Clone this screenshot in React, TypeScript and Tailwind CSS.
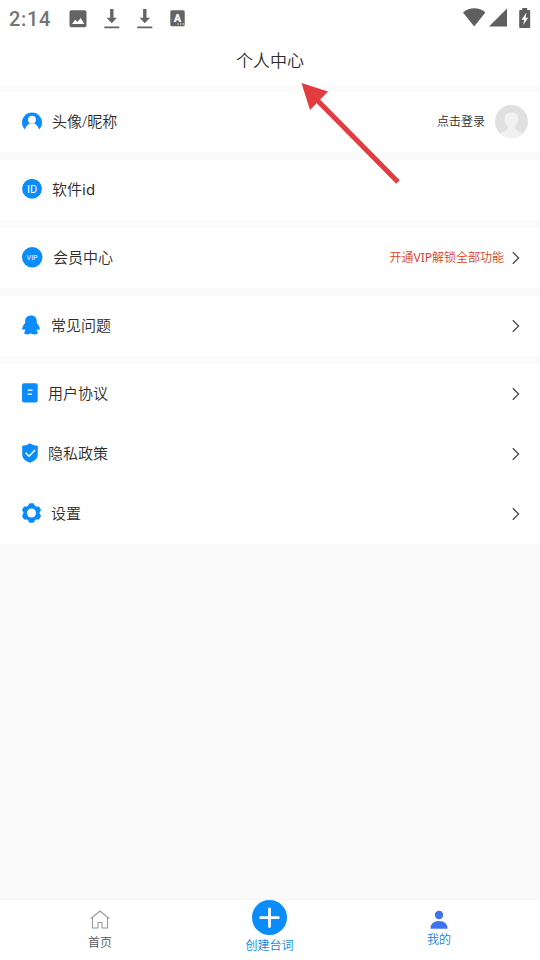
import type { ReactNode } from "react";

const BLUE = "#0a8cfa";

function UserIcon() {
    return (
        <svg width="20" height="20" viewBox="0 0 20 20" fill={BLUE}>
            <path d="M3.600 19.200a10 10 0 1 1 12.800 0Z" />
            <circle cx="10" cy="8.700" r="3.900" fill="#fff" />
            <path d="M2.600 20c.7-4 3-6.500 5-7.400h4.800c2 .9 4.300 3.400 5 7.400Z" fill="#fff" />
        </svg>
    );
}

function IdIcon() {
    return (
        <svg width="20" height="20" viewBox="0 0 20 20">
            <circle cx="10" cy="9.800" r="9.900" fill={BLUE} />
            <text x="10" y="13.600" textAnchor="middle" fill="#fff" className="font-['Roboto',sans-serif] text-[11px] font-normal">
                ID
            </text>
        </svg>
    );
}

function VipIcon() {
    return (
        <svg width="21" height="21" viewBox="0 0 21 21">
            <circle cx="10.200" cy="10.300" r="10.200" fill={BLUE} />
            <text x="4.600" y="13.200" textLength="11" lengthAdjust="spacingAndGlyphs" fill="#fff" className="font-['Roboto',sans-serif] text-[8px] font-normal">
                VIP
            </text>
        </svg>
    );
}

function PenguinIcon() {
    return (
        <svg width="18" height="20" viewBox="0 0 18 20" fill={BLUE}>
            <path d="M9 .5C5.600.500 3.200 2.700 3.200 5.900v2C1.800 9.600.200 11.900.200 13.600c0 1 .5 1.400 1.100 1.200.5-.2.900-.5 1.200-.9.2.8.500 1.500 1 2.100-.8.4-1.300 1-1.300 1.700 0 1.100 1.200 1.700 3.200 1.700 1.600 0 2.900-.4 3.600-1.200.7.8 2 1.200 3.600 1.200 2 0 3.200-.6 3.200-1.700 0-.7-.5-1.300-1.300-1.700.5-.6.8-1.300 1-2.100.3.4.7.700 1.200.9.6.200 1.100-.2 1.100-1.200 0-1.700-1.600-4-3-5.700v-2C14.800 2.700 12.400.500 9 .5Z" />
        </svg>
    );
}

function DocIcon() {
    return (
        <svg width="16" height="20" viewBox="0 0 16 20" fill="none">
            <rect y=".2" width="15.700" height="19.200" rx="1.800" fill={BLUE} />
            <path d="M5.500 7.200h5M5.500 11.200h4.500" stroke="#fff" strokeWidth="1.300" />
        </svg>
    );
}

function ShieldIcon() {
    return (
        <svg width="16" height="20" viewBox="0 0 16 20" fill="none">
            <path d="M8 .3c2 1.500 4.500 2.200 7.800 2.400v8.600c0 4.200-3.300 7-7.800 8.400-4.500-1.400-7.800-4.200-7.800-8.400V2.700C3.500 2.500 6 1.800 8 .3Z" fill={BLUE} />
            <path d="m3.500 9.800 3.500 3.500 6-6.300" stroke="#fff" strokeWidth="1.500" />
        </svg>
    );
}

function GearIcon() {
    return (
        <svg width="19" height="20" viewBox="0 0 19 20">
            <path
                d="M8 1.300h3l1.300 2.300 1.500.9 2.600-.1 1.500 2.700-1.300 2.200v1.400l1.300 2.200-1.500 2.700-2.600-.1-1.500.9-1.300 2.300H8l-1.300-2.300-1.500-.9-2.600.1-1.500-2.700 1.300-2.200V9.300L1.100 7.100l1.500-2.700 2.600.1 1.500-.9Z"
                fill={BLUE}
                stroke={BLUE}
                strokeWidth="2"
                strokeLinejoin="round"
            />
            <circle cx="9.500" cy="10" r="4.500" fill="#fff" />
        </svg>
    );
}

function Chevron() {
    return (
        <svg width="8" height="14" viewBox="0 0 8 14" fill="none" stroke="#4a4a4a" strokeWidth="1.300">
            <path d="m.8 1.200 5.800 5.800L.8 12.800" />
        </svg>
    );
}

function DownloadIcon() {
    return (
        <svg width="16" height="20" viewBox="0 0 16 20" fill="#646464">
            <path d="M6.100 0h3.400v8.800H13l-5.200 5.500L2.600 8.800h3.500ZM.300 17.500h15v1.700H.300Z" />
        </svg>
    );
}

function StatusBar() {
    return (
        <div className="flex h-9 items-center justify-between pl-[9px] pr-[9px] text-[#747474]">
            <div className="flex items-center pt-px">
                <span className="w-[60px] font-['Roboto',sans-serif] text-[20px] font-medium tracking-[0.7px]">2:14</span>
                <svg width="18" height="18" viewBox="0 0 18 18" fill="#646464">
                    <rect x=".5" y=".2" width="17" height="17" rx="1.800" />
                    <path d="m3 14 3.200-4.500 2.300 2.600 3.200-4.200 3.600 6.100Z" fill="#fff" />
                </svg>
                <div className="ml-[17px] flex gap-[17px]">
                    <DownloadIcon />
                    <DownloadIcon />
                </div>
                <svg className="ml-[17px]" width="16" height="17" viewBox="0 0 16 17">
                    <rect x=".3" y=".3" width="14.400" height="16" rx="1.500" fill="#646464" />
                    <text x="7.500" y="12" textAnchor="middle" fill="#fff" className="font-['Roboto',sans-serif] text-[11px] font-black">A</text>
                    <path d="M7.500 14h1.300M10 14h1.300M12.500 14h1.300" stroke="#fff" strokeWidth="1.200" />
                </svg>
            </div>
            <div className="flex items-center pb-px">
                <svg width="23" height="19" viewBox="0 0 23 19" fill="#5f5f5f">
                    <path d="M0 4.400C6.500-1 15.900-1 22.400 4.400L11.200 18.500Z" />
                </svg>
                <svg className="ml-[3px]" width="19" height="19" viewBox="0 0 19 19" fill="#5f5f5f">
                    <path d="M18 .5v18H0Z" />
                </svg>
                <svg className="ml-[11px]" width="12" height="20" viewBox="0 0 12 20" fill="#5f5f5f">
                    <path d="M3.200 0h5v2h2.200c.5 0 .8.300.8.800v16.400c0 .5-.3.800-.8.800H1c-.5 0-.8-.3-.8-.8V2.800C.200 2.300.500 2 1 2h2.200Z" />
                    <path d="m7.500 4.500-5 7.300h2.700L4.200 17l5-7.300H6.500Z" fill="#fff" />
                </svg>
            </div>
        </div>
    );
}

function Avatar() {
    return (
        <svg width="33" height="33" viewBox="0 0 33 33">
            <circle cx="16.500" cy="16.500" r="16.500" fill="#e0e0e0" />
            <path
                d="M16.500 7.500c-4.300 0-7 2.700-7 6.700 0 3 1.300 5.300 3.300 6.800v2.500c0 1.800-4.300 2.500-7.300 4.900a16.500 16.500 0 0 0 22 0c-3-2.400-7.300-3.100-7.300-4.900V21c2-1.500 3.300-3.800 3.300-6.800 0-4-2.700-6.700-7-6.700Z"
                fill="#f1f1f1"
            />
        </svg>
    );
}

function Row({ icon, label, gap, right }: { icon: ReactNode; label: ReactNode; gap: string; right?: ReactNode }) {
    return (
        <div className="flex h-[60px] items-center justify-between bg-white pb-0.5 pl-[22px]">
            <div className={`flex items-center ${gap}`}>
                {icon}
                <span className="text-[15px] leading-5">{label}</span>
            </div>
            {right}
        </div>
    );
}

const arrow = (
    <div className="pr-5 pt-0.5">
        <Chevron />
    </div>
);

export default function App() {
    return (
        <div className="relative flex h-[960px] w-[540px] flex-col overflow-hidden bg-[#fafafa] font-['Noto_Sans','Noto_Sans_CJK_SC',sans-serif] font-[350] text-[#2c2c2c]">
            <header className="h-[86px] bg-white">
                <StatusBar />
                <h1 className="pt-[13px] text-center text-[17px] leading-6">个人中心</h1>
            </header>

            <main className="flex flex-1 flex-col gap-2 pt-1.5">
                <Row
                    icon={<UserIcon />}
                    label="头像/昵称"
                    gap="gap-2.5"
                    right={
                        <div className="flex items-center gap-2.5 pr-3">
                            <span className="pt-0.5 text-[12px] leading-4">点击登录</span>
                            <Avatar />
                        </div>
                    }
                />
                <Row
                    icon={<IdIcon />}
                    label={
                        <>
                            软件<span className="font-normal">id</span>
                        </>
                    }
                    gap="gap-2.5"
                />
                <Row
                    icon={<VipIcon />}
                    label="会员中心"
                    gap="gap-2.5"
                    right={
                        <div className="flex items-center gap-2 pr-5 pt-0.5">
                            <span className="text-[12px] leading-4 text-[#d5432f]">
                                开通<span className="font-normal">VIP</span>解锁全部功能
                            </span>
                            <Chevron />
                        </div>
                    }
                />
                <Row icon={<PenguinIcon />} label="常见问题" gap="gap-[11px]" right={arrow} />
                <section>
                    <Row icon={<DocIcon />} label="用户协议" gap="gap-2.5" right={arrow} />
                    <Row icon={<ShieldIcon />} label="隐私政策" gap="gap-2.5" right={arrow} />
                    <Row icon={<GearIcon />} label="设置" gap="gap-2.5" right={arrow} />
                </section>
            </main>

            <nav className="flex h-[61px] justify-between border-t border-[#f3f3f3] bg-white pl-[69px] pr-[70px] text-[12px] leading-4">
                <div className="flex w-[62px] flex-col items-center pt-[10px] text-[#555]">
                    <svg width="20" height="20" viewBox="0 0 20 20" fill="none" stroke="#999" strokeWidth="1.100">
                        <path d="M1 8.500 10 1l9 7.500M2.500 7.500V18H8v-5.500h4V18h5.500V7.500" />
                    </svg>
                    <span className="mt-[5px]">首页</span>
                </div>
                <div className="flex w-[62px] flex-col items-center text-[#0f83e2]">
                    <svg width="36" height="36" viewBox="0 0 36 36">
                        <circle cx="17.500" cy="17.500" r="17.500" fill={BLUE} />
                        <path d="M17.500 9v17.500M8.700 17.700h17.600" stroke="#fff" strokeWidth="2.800" strokeLinecap="round" />
                    </svg>
                    <span className="mt-0.5">创建台词</span>
                </div>
                <div className="flex w-[62px] flex-col items-center pt-[10px] text-[#0f83e2]">
                    <svg width="18" height="20" viewBox="0 0 18 20" fill="#3e73ee">
                        <circle cx="9" cy="5" r="4.200" />
                        <path d="M.5 18.800C.500 14 3.500 11 9 11s8.500 3 8.500 7.800Z" />
                    </svg>
                    <span className="mt-0.5">我的</span>
                </div>
            </nav>

            <svg className="pointer-events-none absolute left-[296px] top-[78px]" width="110" height="112" viewBox="0 0 110 112">
                <path d="M20 21 102 104" stroke="#e23c40" strokeWidth="5" />
                <path d="m5.500 5 26.500 8.500L14 32Z" fill="#e23c40" />
            </svg>
        </div>
    );
}
